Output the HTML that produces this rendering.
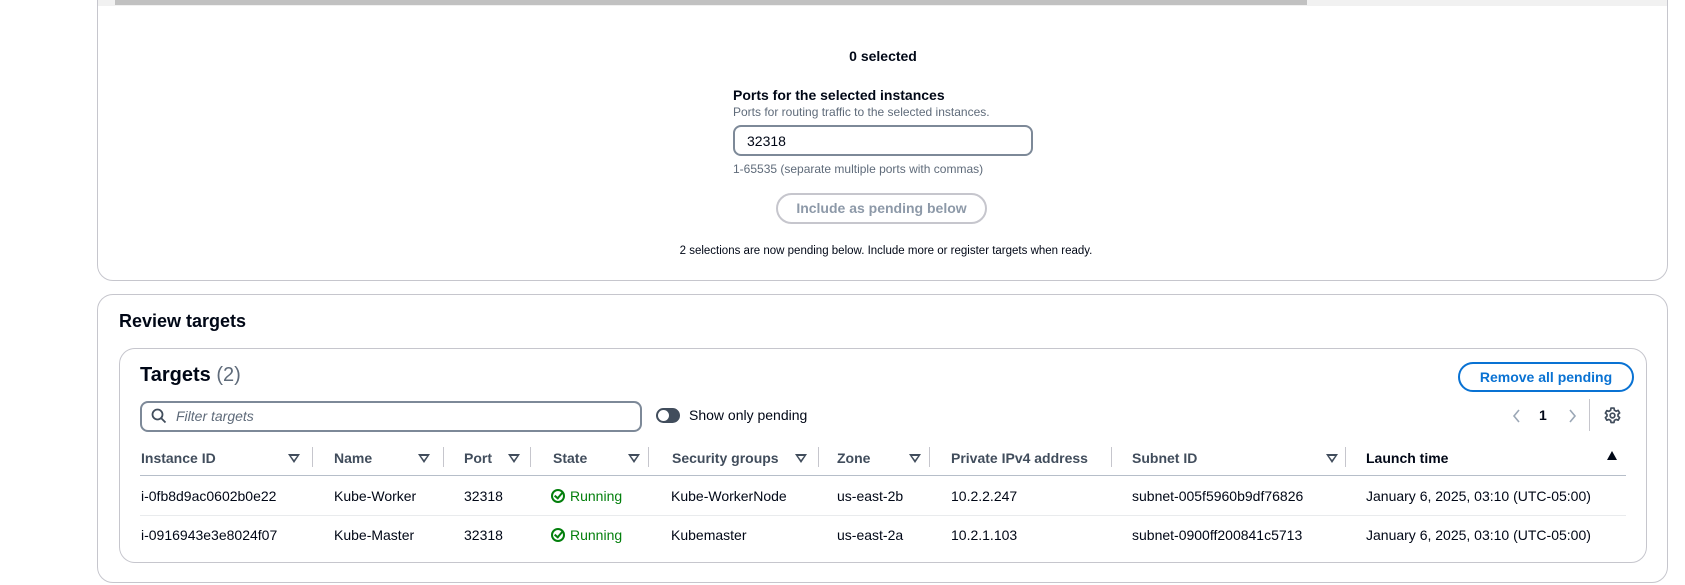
<!DOCTYPE html>
<html><head><meta charset="utf-8"><style>
*{box-sizing:border-box;margin:0;padding:0}
body{width:1685px;height:585px;background:#fff;font-family:"Liberation Sans",sans-serif;color:#000716;position:relative;overflow:hidden;font-size:14px}
.a{position:absolute;white-space:nowrap}
.panel{position:absolute;border:1px solid #c6c6cd;border-radius:16px;background:#fff}
.hd{font-weight:bold;color:#414d5c;font-size:14px}
.fi{position:absolute;width:0;height:0;border-left:6px solid transparent;border-right:6px solid transparent;border-top:9px solid #414d5c}
.fi:after{content:"";position:absolute;left:-3px;top:-7.5px;border-left:3px solid transparent;border-right:3px solid transparent;border-top:4.5px solid #fff}
.sep{position:absolute;width:1px;height:20px;background:#c6c6cd;top:447px}
.ok{display:inline-block;width:14px;height:14px;border:2px solid #037f0c;border-radius:50%;vertical-align:-2px;margin-right:5px;position:relative}
.ok:after{content:"";position:absolute;left:3px;top:0px;width:3px;height:6px;border-right:2px solid #037f0c;border-bottom:2px solid #037f0c;transform:rotate(40deg)}
</style></head><body>
<div class="panel" style="left:97px;top:-20px;width:1571px;height:301px;border-radius:0 0 16px 16px"></div>
<div class="a" style="left:98px;top:0;width:1569px;height:6px;background:#f1f1f1"></div>
<div class="a" style="left:115px;top:0;width:1192px;height:5px;background:#c1c1c1"></div>
<div class="a" style="left:0;width:1766px;top:48px;text-align:center;font-weight:bold;font-size:14px">0 selected</div>
<div class="a" style="left:733px;top:87px;font-weight:bold;font-size:14px">Ports for the selected instances</div>
<div class="a" style="left:733px;top:105px;font-size:12px;color:#5f6b7a">Ports for routing traffic to the selected instances.</div>
<div class="a" style="left:733px;top:125px;width:300px;height:31px;border:2px solid #7d8998;border-radius:8px;padding:6px 12px;font-size:14px">32318</div>
<div class="a" style="left:733px;top:162px;font-size:12px;color:#5f6b7a">1-65535 (separate multiple ports with commas)</div>
<div class="a" style="left:776px;top:193px;width:211px;height:31px;border:2px solid #c6c6cd;border-radius:16px;text-align:center;line-height:27px;font-weight:bold;color:#8d99a8;font-size:14px">Include as pending below</div>
<div class="a" style="left:0;width:1772px;top:245px;text-align:center;font-size:11.5px">2 selections are now pending below. Include more or register targets when ready.</div>

<div class="panel" style="left:97px;top:294px;width:1571px;height:289px"></div>
<div class="a" style="left:119px;top:311px;font-weight:bold;font-size:18px">Review targets</div>
<div class="panel" style="left:119px;top:348px;width:1528px;height:215px"></div>
<div class="a" style="left:140px;top:364px;font-weight:bold;font-size:20px">Targets <span style="font-weight:normal;color:#5f6b7a">(2)</span></div>
<div class="a" style="left:1458px;top:362px;width:176px;height:30px;border:2px solid #0972d3;border-radius:16px;text-align:center;line-height:26px;font-weight:bold;color:#0972d3;font-size:14px">Remove all pending</div>
<div class="a" style="left:140px;top:401px;width:502px;height:31px;border:2px solid #7d8998;border-radius:8px"></div>
<svg class="a" style="left:151px;top:408px" width="16" height="16" viewBox="0 0 16 16"><circle cx="6.5" cy="6.5" r="5" fill="none" stroke="#414d5c" stroke-width="1.8"/><path d="M10 10l4.5 4.5" stroke="#414d5c" stroke-width="1.8"/></svg>
<div class="a" style="left:176px;top:408px;font-style:italic;color:#5f6b7a;font-size:14px">Filter targets</div>
<div class="a" style="left:656px;top:408px;width:24px;height:15px;border-radius:8px;background:#414d5c"></div>
<div class="a" style="left:658px;top:410px;width:11px;height:11px;border-radius:50%;background:#fff"></div>
<div class="a" style="left:689px;top:407px;font-size:14px">Show only pending</div>
<svg class="a" style="left:1512px;top:408px" width="10" height="16" viewBox="0 0 10 16"><path d="M7 2L2 8l5 6" fill="none" stroke="#9ba7b6" stroke-width="1.6"/></svg>
<div class="a" style="left:1539px;top:407px;font-weight:bold;font-size:14px">1</div>
<svg class="a" style="left:1567px;top:408px" width="10" height="16" viewBox="0 0 10 16"><path d="M3 2l5 6-5 6" fill="none" stroke="#9ba7b6" stroke-width="1.6"/></svg>
<div class="a" style="left:1589px;top:399px;width:1px;height:32px;background:#c6c6cd"></div>
<svg class="a" style="left:1604px;top:407px" width="17" height="17" viewBox="0 0 16 16"><path d="M6.6 1h2.8l.4 2 1.6.9 1.9-.7 1.4 2.4-1.5 1.3v1.8l1.5 1.3-1.4 2.4-1.9-.7-1.6.9-.4 2H6.6l-.4-2-1.6-.9-1.9.7-1.4-2.4 1.5-1.3V7.1L1.3 5.8l1.4-2.4 1.9.7 1.6-.9z" fill="none" stroke="#414d5c" stroke-width="1.6" stroke-linejoin="round"/><circle cx="8" cy="8" r="2.2" fill="none" stroke="#414d5c" stroke-width="1.6"/></svg>

<div class="a hd" style="left:141px;top:450px">Instance ID</div><div class="fi" style="left:288px;top:454px"></div><div class="sep" style="left:312px"></div>
<div class="a hd" style="left:334px;top:450px">Name</div><div class="fi" style="left:418px;top:454px"></div><div class="sep" style="left:443px"></div>
<div class="a hd" style="left:464px;top:450px">Port</div><div class="fi" style="left:508px;top:454px"></div><div class="sep" style="left:530px"></div>
<div class="a hd" style="left:553px;top:450px">State</div><div class="fi" style="left:628px;top:454px"></div><div class="sep" style="left:648px"></div>
<div class="a hd" style="left:672px;top:450px">Security groups</div><div class="fi" style="left:795px;top:454px"></div><div class="sep" style="left:818px"></div>
<div class="a hd" style="left:837px;top:450px">Zone</div><div class="fi" style="left:909px;top:454px"></div><div class="sep" style="left:929px"></div>
<div class="a hd" style="left:951px;top:450px">Private IPv4 address</div><div class="sep" style="left:1111px"></div>
<div class="a hd" style="left:1132px;top:450px">Subnet ID</div><div class="fi" style="left:1326px;top:454px"></div><div class="sep" style="left:1345px"></div>
<div class="a hd" style="left:1366px;top:450px;color:#000716">Launch time</div>
<div class="a" style="left:1607px;top:451px;width:0;height:0;border-left:5px solid transparent;border-right:5px solid transparent;border-bottom:9px solid #000716"></div>
<div class="a" style="left:140px;top:475px;width:1486px;height:1px;background:#b6bec9"></div>
<div class="a" style="left:140px;top:515px;width:1486px;height:1px;background:#e9ebed"></div>

<div class="a" style="left:141px;top:488px">i-0fb8d9ac0602b0e22</div>
<div class="a" style="left:334px;top:488px">Kube-Worker</div>
<div class="a" style="left:464px;top:488px">32318</div>
<div class="a" style="left:551px;top:488px;color:#037f0c"><span class="ok"></span>Running</div>
<div class="a" style="left:671px;top:488px">Kube-WorkerNode</div>
<div class="a" style="left:837px;top:488px">us-east-2b</div>
<div class="a" style="left:951px;top:488px">10.2.2.247</div>
<div class="a" style="left:1132px;top:488px">subnet-005f5960b9df76826</div>
<div class="a" style="left:1366px;top:488px">January 6, 2025, 03:10 (UTC-05:00)</div>

<div class="a" style="left:141px;top:527px">i-0916943e3e8024f07</div>
<div class="a" style="left:334px;top:527px">Kube-Master</div>
<div class="a" style="left:464px;top:527px">32318</div>
<div class="a" style="left:551px;top:527px;color:#037f0c"><span class="ok"></span>Running</div>
<div class="a" style="left:671px;top:527px">Kubemaster</div>
<div class="a" style="left:837px;top:527px">us-east-2a</div>
<div class="a" style="left:951px;top:527px">10.2.1.103</div>
<div class="a" style="left:1132px;top:527px">subnet-0900ff200841c5713</div>
<div class="a" style="left:1366px;top:527px">January 6, 2025, 03:10 (UTC-05:00)</div>
</body></html>
